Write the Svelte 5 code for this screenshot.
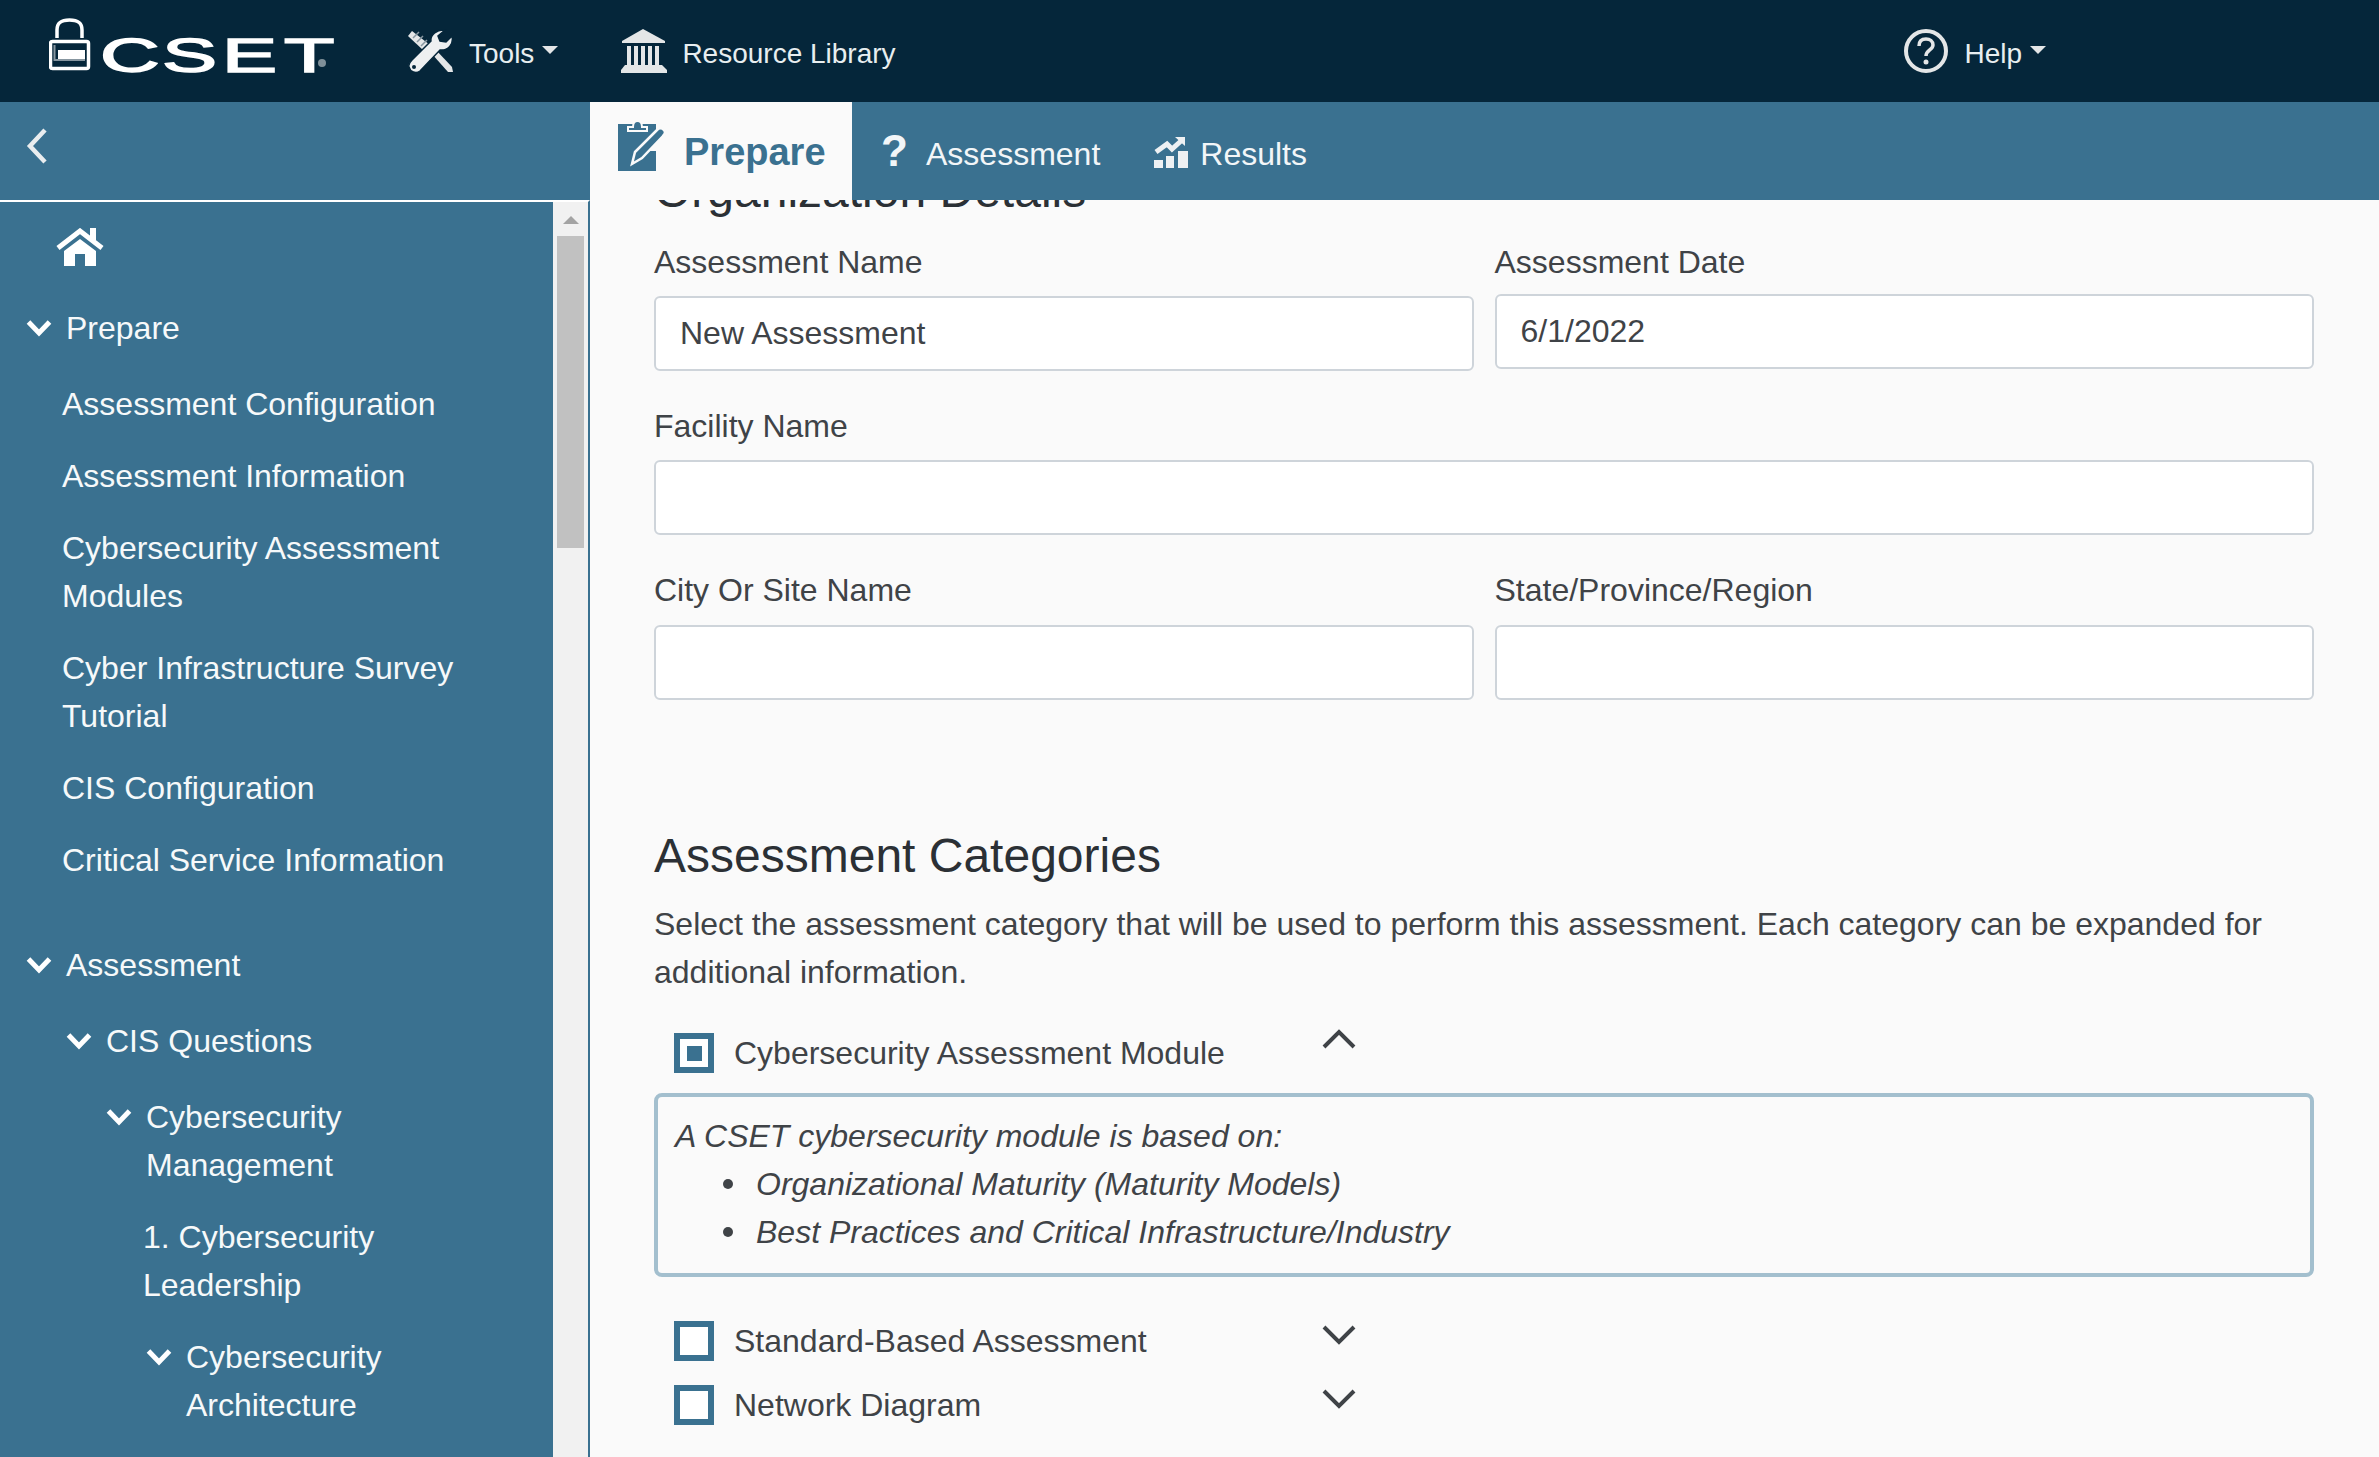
<script>
  const navItems = [
    { label: 'Prepare', level: 0, open: true, section: true },
    { label: 'Assessment Configuration', level: 1 },
    { label: 'Assessment Information', level: 1 },
    { label: 'Cybersecurity Assessment Modules', level: 1 },
    { label: 'Cyber Infrastructure Survey Tutorial', level: 1 },
    { label: 'CIS Configuration', level: 1 },
    { label: 'Critical Service Information', level: 1, last: true },
    { label: 'Assessment', level: 0, open: true, section: true },
    { label: 'CIS Questions', level: 2, open: true, section: true },
    { label: 'Cybersecurity Management', level: 3, open: true },
    { label: '1. Cybersecurity Leadership', level: 4 },
    { label: 'Cybersecurity Architecture', level: 5, open: true }
  ];

  const categories = [
    { label: 'Cybersecurity Assessment Module', checked: true, expanded: true },
    { label: 'Standard-Based Assessment' },
    { label: 'Network Diagram' }
  ];
</script>

<div class="page">
  <header class="topbar">
    <svg class="logo" viewBox="0 0 287 56" aria-label="CSET logo">
      <path class="shackle" d="M8 20v-8C8 4 13 2 20.500 2S33 4 33 12v8" />
      <rect class="lock" x="1.500" y="23.500" width="38" height="27" rx="2" />
      <path class="lock-shade" d="M5.500 27v15H36" />
      <rect class="logo-fill" x="9" y="32" width="27" height="9" />
      <text transform="translate(51 54) scale(1.72 1)" x="0 36 71 107" y="0">CSET</text>
      <circle class="reg" cx="273" cy="45" r="4" />
    </svg>

    <a class="nav-link tools">
      <svg class="nav-icon" viewBox="0 0 46 44">
        <path class="driver" d="M4 2L0 7l16 15 6-6z" />
        <path class="driver-lines" d="M5 9l6-6M9 13l6-6M13 17l6-6" />
        <path class="driver" d="M24 25l4-4 16 17 1 5h-5z" />
        <path class="wrench" d="M37 1l-7 6 2 5 6 1 6-6c2 8-4 15-12 14L12 42c-4 3-10 1-11-4-1-3 1-5 3-7l19-19C22 6 29 0 37 1z" />
        <circle class="wrench-hole" cx="6" cy="38" r="2" />
      </svg>
      Tools<span class="caret"></span>
    </a>

    <a class="nav-link library">
      <svg class="nav-icon" viewBox="0 0 46 44">
        <path class="tool-fill" d="M22 0l22 12v2H1v-2z" />
        <path class="tool-fill" d="M6 17h4v19H6zM13 17h4v19h-4zM20 17h4v19h-4zM27 17h4v19h-4zM34 17h4v19h-4z" />
        <path class="tool-fill" d="M4 36h37l5 5v3H0v-3z" />
      </svg>
      Resource Library
    </a>

    <a class="nav-link help">
      <svg class="nav-icon" viewBox="0 0 46 44">
        <circle class="help-ring" cx="23" cy="22" r="20" />
        <path class="help-mark" d="M16 17c0-5 3-7 7-7s7 2 7 6c0 5-7 5-7 11" />
        <circle class="tool-fill" cx="23" cy="33" r="2.500" />
      </svg>
      Help<span class="caret"></span>
    </a>
  </header>

  <div class="band">
    <div class="band-left">
      <svg class="back" viewBox="0 0 22 36"><path d="M19 2L4 18l15 16" /></svg>
    </div>
    <div class="tabs">
      <a class="tab active">
        <svg class="prepare-icon" viewBox="0 0 48 52">
          <path class="clip-body" d="M0 5h38v7L31 32h7v20H0z" />
          <path class="clip-top" d="M10 12V8h5c0-8 9-8 9 0h5v4z" />
          <path class="pencil" d="M14 45l3-12 22-22c2-2 5-2 7 0s1 4-1 6L24 39z" />
        </svg>
        Prepare
      </a>
      <a class="tab">
        <span class="question">?</span>
        Assessment
      </a>
      <a class="tab">
        <svg class="results-icon" viewBox="0 0 36 33">
          <path class="result-fill" d="M1 24h9v8H1zM13 20h8v12h-8zM25 15h10v17H25z" />
          <path class="trend" d="M3 16l11-8 5 5 9-8" />
          <path class="result-fill" d="M22 1h10v9z" />
        </svg>
        Results
      </a>
    </div>
  </div>

  <div class="body">
    <aside class="sidebar">
      <nav class="tree">
        <svg class="home" viewBox="0 0 48 38">
          <path class="home-body" d="M34 0h6v12h-6z" />
          <path class="home-roof" d="M2 20L24 3l22 17" />
          <path class="home-body" d="M8 23L24 11l16 12v15H29V26H19v12H8z" />
        </svg>
        {#each navItems as item}
          <div class="item l{item.level}" class:section={item.section} class:last={item.last}>
            {#if item.open}
              <svg class="open" viewBox="0 0 26 18"><path d="M2.500 3L13 14 23.500 3" /></svg>
            {/if}
            <span>{item.label}</span>
          </div>
        {/each}
      </nav>
      <div class="scrollbar">
        <span class="arrow"></span>
        <span class="thumb"></span>
      </div>
    </aside>

    <main class="content">
      <h2 class="clipped">Organization Details</h2>

      <div class="fields">
        <div class="field">
          <label for="name">Assessment Name</label>
          <input id="name" class="name-input" value="New Assessment" />
        </div>
        <div class="field">
          <label for="date">Assessment Date</label>
          <input id="date" value="6/1/2022" />
        </div>
        <div class="field wide">
          <label for="facility">Facility Name</label>
          <input id="facility" />
        </div>
        <div class="field low">
          <label for="city">City Or Site Name</label>
          <input id="city" />
        </div>
        <div class="field low">
          <label for="state">State/Province/Region</label>
          <input id="state" />
        </div>
      </div>

      <h2 class="categories">Assessment Categories</h2>
      <p class="intro">Select the assessment category that will be used to perform this assessment. Each category can be expanded for additional information.</p>

      {#each categories as cat}
        <div class="category" class:expanded={cat.expanded}>
          <span class="check"><span class:mark={cat.checked}></span></span>
          <span class="cat-label">{cat.label}</span>
          <svg class="toggle" viewBox="0 0 34 20">
            <path d={cat.expanded ? 'M2 18L17 3l15 15' : 'M2 2l15 15L32 2'} />
          </svg>
        </div>
        {#if cat.expanded}
          <div class="panel">
            A CSET cybersecurity module is based on:
            <ul>
              <li>Organizational Maturity (Maturity Models)</li>
              <li>Best Practices and Critical Infrastructure/Industry</li>
            </ul>
          </div>
        {/if}
      {/each}
    </main>
  </div>
</div>

<style>
  :global(body) {
    margin: 0;
    background: #fafafa;
  }

  .page {
    height: 1457px;
    overflow: hidden;
    display: flex;
    flex-direction: column;
    font-family: "Liberation Sans", Arial, sans-serif;
    font-size: 32px;
    line-height: 48px;
    color: #3f4347;
  }

  .topbar {
    flex: 0 0 102px;
    display: flex;
    align-items: center;
    padding: 0 333px 0 49px;
    background: #05263a;
    color: #e8eef0;
    font-size: 28px;
  }

  .logo {
    width: 287px;
    height: 56px;
    margin-top: -10px;
  }

  .logo text {
    font-family: "Liberation Sans", Arial, sans-serif;
    font-size: 48px;
    fill: #fff;
    stroke: #fff;
    stroke-width: 1.500;
  }

  .logo-fill {
    fill: #fff;
  }

  .reg {
    fill: #7f8f98;
  }

  .shackle,
  .lock {
    fill: none;
    stroke: #fff;
    stroke-width: 3.500;
  }

  .lock-shade {
    fill: none;
    stroke: #8796a0;
    stroke-width: 2;
  }

  .nav-link {
    display: flex;
    align-items: center;
    margin-top: 6px;
  }

  .nav-icon {
    width: 46px;
    height: 44px;
    margin: -6px 15px 0 0;
  }

  .tools {
    margin-left: 72px;
  }

  .library {
    margin-left: 63px;
  }

  .help {
    margin-left: auto;
  }

  .driver {
    fill: #e4e6e7;
  }

  .driver-lines {
    fill: none;
    stroke: #8796a0;
    stroke-width: 1.500;
  }

  .wrench {
    fill: #eef0f1;
    stroke: #05263a;
    stroke-width: 1.500;
  }

  .wrench-hole {
    fill: #05263a;
  }

  .tool-fill {
    fill: #e4e6e7;
  }

  .help-ring {
    fill: none;
    stroke: #e4e6e7;
    stroke-width: 4;
  }

  .help-mark {
    fill: none;
    stroke: #e4e6e7;
    stroke-width: 3.500;
  }

  .caret {
    width: 0;
    height: 0;
    margin: -8px 0 0 8px;
    border-top: 8px solid #e4e6e7;
    border-left: 8px solid transparent;
    border-right: 8px solid transparent;
  }

  .band {
    flex: 0 0 98px;
    display: flex;
    background: #3a7190;
    color: #f2f6f8;
  }

  .band-left {
    width: 590px;
    display: flex;
    padding: 26px 0 0 26px;
    box-sizing: border-box;
  }

  .back {
    width: 22px;
    height: 36px;
  }

  .back path {
    fill: none;
    stroke: #e9edef;
    stroke-width: 4.500;
  }

  .tabs {
    display: flex;
  }

  .tab {
    display: flex;
    align-items: center;
    padding: 6px 26px 0 0;
    margin-left: 23px;
  }

  .tab.active {
    width: 262px;
    box-sizing: border-box;
    margin-left: 0;
    padding: 2px 0 0 28px;
    background: #fafafa;
    color: #3a7190;
    font-size: 38px;
    font-weight: 700;
  }

  .prepare-icon {
    width: 48px;
    height: 52px;
    margin: -14px 18px 0 0;
  }

  .clip-body {
    fill: #3a7190;
  }

  .clip-top {
    fill: #3a7190;
    stroke: #fafafa;
    stroke-width: 2;
  }

  .pencil {
    fill: #3a7190;
    stroke: #fafafa;
    stroke-width: 2.500;
  }

  .question {
    width: 30px;
    margin: -6px 15px 0 6px;
    font-size: 44px;
    font-weight: 700;
  }

  .results-icon {
    width: 36px;
    height: 33px;
    margin: -4px 11px 0 4px;
  }

  .result-fill {
    fill: #eef1f3;
  }

  .trend {
    fill: none;
    stroke: #eef1f3;
    stroke-width: 5;
  }

  .body {
    flex: 1;
    display: flex;
    min-height: 0;
  }

  .sidebar {
    width: 590px;
    flex: none;
    display: flex;
    box-sizing: border-box;
    border-top: 2px solid #fff;
    border-right: 2px solid #3a7190;
  }

  .tree {
    flex: 1;
    overflow: hidden;
    padding-right: 43px;
    background: #3a7190;
    color: #f6f9fa;
  }

  .home {
    display: block;
    width: 48px;
    height: 38px;
    margin: 26px 0 38px 56px;
  }

  .home-roof {
    fill: none;
    stroke: #fff;
    stroke-width: 5;
  }

  .home-body {
    fill: #fff;
  }

  .item {
    position: relative;
    margin-bottom: 24px;
  }

  .item.section {
    margin-bottom: 28px;
  }

  .item.last {
    margin-bottom: 57px;
  }

  .l0 { padding-left: 66px; }
  .l1 { padding-left: 62px; }
  .l2 { padding-left: 106px; }
  .l3 { padding-left: 146px; }
  .l4 { padding-left: 143px; }
  .l5 { padding-left: 186px; }

  /* chevron hangs in the indent to the left of the label */
  .open {
    position: absolute;
    top: 15px;
    margin-left: -40px;
    width: 26px;
    height: 18px;
  }

  .open path {
    fill: none;
    stroke: #fff;
    stroke-width: 5;
  }

  .scrollbar {
    width: 35px;
    flex: none;
    display: flex;
    flex-direction: column;
    align-items: center;
    background: #f1f1f1;
  }

  .arrow {
    margin-top: 14px;
    width: 0;
    height: 0;
    border-bottom: 8px solid #a3a3a3;
    border-left: 8px solid transparent;
    border-right: 8px solid transparent;
  }

  .thumb {
    margin-top: 12px;
    width: 27px;
    height: 312px;
    background: #c1c1c1;
  }

  .content {
    flex: 1;
    min-width: 0;
    overflow: hidden;
    padding: 0 65px 0 64px;
    background: #fafafa;
  }

  h2 {
    margin: 0;
    font-size: 48px;
    font-weight: 400;
    line-height: 58px;
    color: #2b3035;
  }

  .clipped {
    margin-top: -38px;
  }

  .fields {
    display: grid;
    grid-template-columns: 1fr 1fr;
    column-gap: 21px;
    row-gap: 31px;
    margin-top: 18px;
  }

  .field {
    display: flex;
    flex-direction: column;
    gap: 8px;
  }

  .field.wide {
    grid-column: 1 / -1;
    gap: 10px;
    margin-top: 2px;
  }

  .field.low {
    gap: 11px;
  }

  input {
    height: 75px;
    box-sizing: border-box;
    padding: 0 24px;
    border: 2px solid #ced4da;
    border-radius: 6px;
    background: #fff;
    color: #3f4347;
    font: inherit;
  }

  .name-input {
    margin-top: 2px;
    margin-bottom: -2px;
  }

  .categories {
    margin-top: 127px;
  }

  .intro {
    margin: 15px 0 0;
  }

  .category {
    display: flex;
    align-items: center;
    height: 48px;
    margin-bottom: 16px;
    padding-left: 20px;
  }

  .category.expanded {
    margin-top: 33px;
  }

  .check {
    width: 40px;
    height: 40px;
    box-sizing: border-box;
    display: flex;
    align-items: center;
    justify-content: center;
    border: 6px solid #3a7190;
    background: #fff;
  }

  .mark {
    width: 15px;
    height: 15px;
    background: #3a7190;
  }

  .cat-label {
    width: 588px;
    margin-left: 20px;
  }

  .toggle {
    width: 34px;
    height: 20px;
    margin-bottom: 12px;
  }

  .expanded .toggle {
    margin-bottom: 28px;
  }

  .toggle path {
    fill: none;
    stroke: #3f4347;
    stroke-width: 4;
  }

  .panel {
    margin: 0 0 40px;
    padding: 15px 16px 17px 17px;
    border: 4px solid #a3bfce;
    border-radius: 8px;
    font-style: italic;
  }

  ul {
    margin: 0;
    padding-left: 81px;
    list-style: none;
  }

  li {
    position: relative;
  }

  li::before {
    content: "";
    position: absolute;
    left: -33px;
    top: 19px;
    width: 10px;
    height: 10px;
    border-radius: 50%;
    background: #3f4347;
  }
</style>
